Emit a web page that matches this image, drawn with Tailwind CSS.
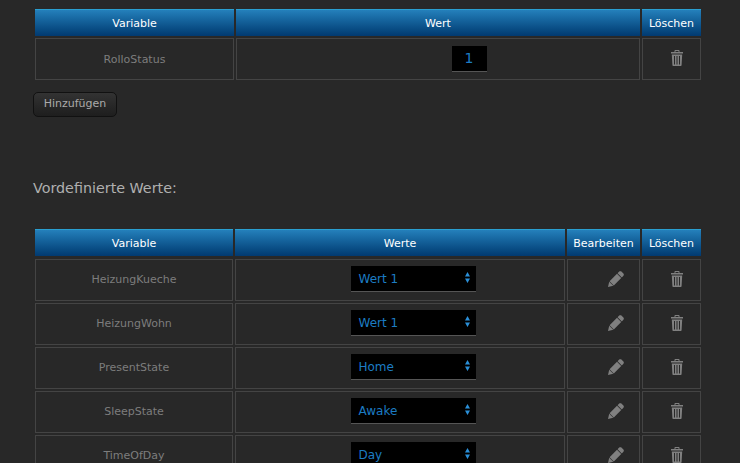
<!doctype html>
<html lang="de">
<head>
    <meta charset="utf-8">
    <script src="https://cdn.jsdelivr.net/npm/@tailwindcss/browser@4"></script>
</head>
<body class="bg-[#282828] h-[463px] w-[740px] overflow-hidden font-['DejaVu_Sans',sans-serif] text-[11px] text-[#7d7d7d]">

    <!-- Variablen -->
    <div class="pl-[35px] pt-[9px] w-[701px]">
        <div class="grid grid-cols-[199px_404px_59px] gap-x-[2px] gap-y-[2px]">
            <div class="h-[27px] pt-[2px] flex items-center justify-center text-white border-t border-[#2a9fd0] bg-gradient-to-b from-[#2480bb] to-[#023a70]">Variable</div>
            <div class="h-[27px] pt-[2px] flex items-center justify-center text-white border-t border-[#2a9fd0] bg-gradient-to-b from-[#2480bb] to-[#023a70]">Wert</div>
            <div class="h-[27px] pt-[2px] flex items-center justify-center text-white border-t border-[#2a9fd0] bg-gradient-to-b from-[#2480bb] to-[#023a70]">Löschen</div>

            <div class="h-[42px] pt-[2px] flex items-center justify-center border border-[#444]">RolloStatus</div>
            <div class="h-[42px] pl-[62px] flex items-center justify-center border border-[#444]">
                <div class="w-[35px] h-[26px] bg-black border-b border-[#555] flex items-center justify-center text-[14px] text-[#1c7cc4]">1</div>
            </div>
            <div class="h-[42px] pl-[10px] pb-[2px] flex items-center justify-center border border-[#444]">
                <svg class="w-[12px] h-[16px] text-[#808080]" viewBox="0 0 12 16" fill="currentColor"><path fill-rule="evenodd" d="M3.500 2V1c0-.6.4-1 1-1h3c.6 0 1 .4 1 1v1H12v1.500H0V2h3.500zM4.500 1v1h3V1h-3zM.8 4.500h10.400L10.600 15c0 .6-.5 1-1 1H2.400c-.5 0-1-.4-1-1L.8 4.500zM3 6v8.500h1V6H3zM5.500 6v8.500h1V6H5.500zM8 6v8.500h1V6H8z"/></svg>
            </div>
        </div>
    </div>

    <div class="pl-[33px] mt-[12px]">
        <button class="h-[25px] w-[84px] rounded-[5px] border border-[#111] bg-gradient-to-b from-[#333] to-[#1e1e1e] text-[#aaa] text-[11px]">Hinzufügen</button>
    </div>

    <h2 class="pl-[33px] mt-[62px] text-[14.3px] leading-[18px] text-[#b0b0b0]">Vordefinierte Werte:</h2>

    <!-- Vordefinierte Werte -->
    <div class="pl-[35px] pt-[32px] w-[701px]">
        <div class="grid grid-cols-[198px_330px_73px_59px] gap-x-[2px] gap-y-[2px]">
            <div class="h-[27px] mb-[3px] pt-[2px] flex items-center justify-center text-white border-t border-[#2a9fd0] bg-gradient-to-b from-[#2480bb] to-[#023a70]">Variable</div>
            <div class="h-[27px] mb-[3px] pt-[2px] flex items-center justify-center text-white border-t border-[#2a9fd0] bg-gradient-to-b from-[#2480bb] to-[#023a70]">Werte</div>
            <div class="h-[27px] mb-[3px] pt-[2px] flex items-center justify-center text-white border-t border-[#2a9fd0] bg-gradient-to-b from-[#2480bb] to-[#023a70]">Bearbeiten</div>
            <div class="h-[27px] mb-[3px] pt-[2px] flex items-center justify-center text-white border-t border-[#2a9fd0] bg-gradient-to-b from-[#2480bb] to-[#023a70]">Löschen</div>
        </div>
        <div id="rows" class="grid grid-cols-[198px_330px_73px_59px] gap-x-[2px] gap-y-[2px]"></div>
    </div>

    <script>
        const rows = [['HeizungKueche', 'Wert 1'], ['HeizungWohn', 'Wert 1'], ['PresentState', 'Home'], ['SleepState', 'Awake'], ['TimeOfDay', 'Day']];

        document.getElementById('rows').innerHTML = rows.map(([name, value]) => `
            <div class="h-[42px] flex items-center justify-center border border-[#444]">${name}</div>
            <div class="h-[42px] pl-[26px] pb-[2px] flex items-center justify-center border border-[#444]">
                <div class="relative w-[125px] h-[26px] bg-black border-b border-[#555] flex items-center pl-[8px] text-[12px] text-[#1c7cc4]">${value}
                    <svg class="absolute right-[6px] top-[6px] w-[5px] h-[11px]" viewBox="0 0 5 11" fill="#2a8fd8"><path d="M2.500 0L5 4.500H0zM0 6.500h5L2.500 11z"/></svg>
                </div>
            </div>
            <div class="h-[42px] pl-[24px] pb-[2px] flex items-center justify-center border border-[#444]">
                <svg class="w-[16px] h-[16px] text-[#808080]" viewBox="0 0 16 16" fill="currentColor"><path d="M9.600 2.200L11.200.6c.6-.6 1.600-.6 2.200 0l2 2c.6.6.6 1.600 0 2.200L13.800 6.400zM9 2.800L13.200 7l-7.400 7.400-4.200-4.200zM1.200 10.700l4.100 4.100L0 16z"/></svg>
            </div>
            <div class="h-[42px] pl-[10px] pb-[2px] flex items-center justify-center border border-[#444]">
                <svg class="w-[12px] h-[16px] text-[#808080]" viewBox="0 0 12 16" fill="currentColor"><path fill-rule="evenodd" d="M3.500 2V1c0-.6.4-1 1-1h3c.6 0 1 .4 1 1v1H12v1.500H0V2h3.500zM4.500 1v1h3V1h-3zM.8 4.500h10.400L10.600 15c0 .6-.5 1-1 1H2.400c-.5 0-1-.4-1-1L.8 4.500zM3 6v8.500h1V6H3zM5.500 6v8.500h1V6H5.500zM8 6v8.500h1V6H8z"/></svg>
            </div>`).join('');
    </script>
</body>
</html>
